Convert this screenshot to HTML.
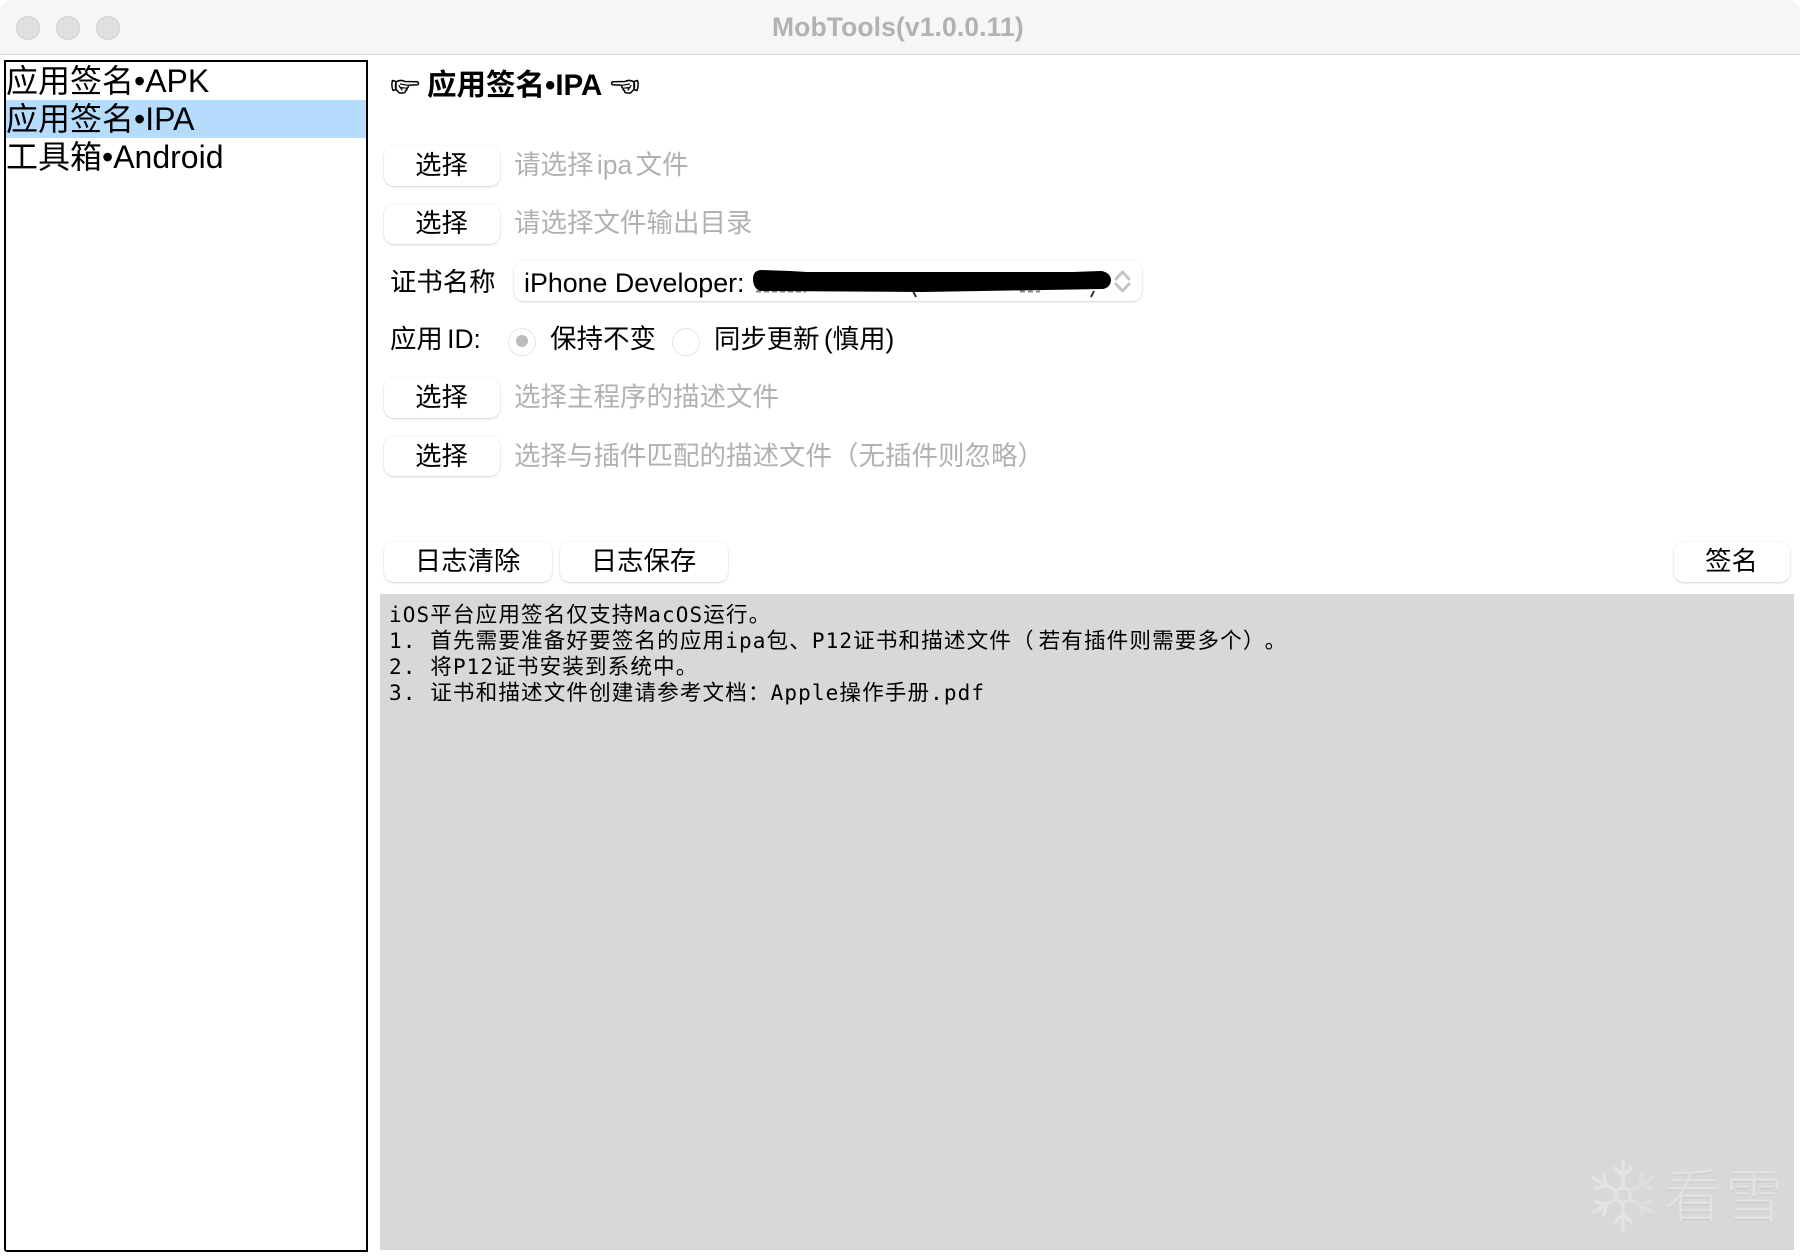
<!DOCTYPE html>
<html lang="zh"><head><meta charset="utf-8"><style>
html,body{margin:0;padding:0;width:1800px;height:1256px;overflow:hidden;background:#fff}
body{position:relative;font-family:"Liberation Sans","Noto Sans CJK SC",sans-serif;color:#000}
.a{position:absolute}
.t{position:absolute;white-space:nowrap;line-height:1}
.btn{position:absolute;height:40px;background:#fff;border-radius:10px;box-shadow:0 1px 2px rgba(0,0,0,.16),0 0 1px rgba(0,0,0,.1);text-align:center;font-size:26.4px;line-height:39px;text-indent:-1px}
.ph{color:#b1b1b1;font-size:26.5px}
.tl{position:absolute;top:16px;width:22px;height:22px;border-radius:50%;background:#e0e0e0;border:1px solid #cfcfcf}
.li{position:absolute;left:0;font-size:32px;line-height:38px;height:38px;white-space:nowrap;width:360px}
.rd{position:absolute;top:328px;width:26px;height:26px;border-radius:50%;background:#fff;border:1px solid #e6e6e6;box-shadow:0 1px 1px rgba(0,0,0,.04)}
.log{position:absolute;left:389px;white-space:pre;font-family:"DejaVu Sans Mono","Liberation Mono",monospace;font-size:21px;letter-spacing:1.1px;line-height:26px;height:26px;color:#000}
.log b{font-family:"Noto Sans CJK SC",sans-serif;font-weight:400;font-size:21.6px}
</style></head><body>
<div class="a" style="left:0;top:0;width:1800px;height:54px;background:#f6f6f6;border-bottom:1px solid #d2d2d2;border-radius:12px 12px 0 0"></div>
<div class="tl" style="left:16px"></div><div class="tl" style="left:56px"></div><div class="tl" style="left:96px"></div>
<div class="t" style="left:772px;top:14px;font-size:26.5px;font-weight:700;color:#b2b2b2;letter-spacing:.1px">MobTools(v1.0.0.11)</div>

<div class="a" style="left:4px;top:60px;width:360px;height:1188px;border:2px solid #000;background:#fff;border-bottom-left-radius:3px">
<div class="li" style="top:0">应用签名•APK</div>
<div class="li" style="top:38px;background:#b5dcfd">应用签名•IPA</div>
<div class="li" style="top:76px">工具箱•Android</div>
</div>

<svg class="a" style="left:391px;top:77px" width="29" height="17" viewBox="0 0 29 17" fill="#fff" stroke="#000" stroke-width="1.5" stroke-linejoin="round" stroke-linecap="round">
<path d="M1.5 3.5q-1.5 5 .5 10l3-1q-1-4 0-8z"/>
<path d="M5 5C8 3 11 3 14 4.500L26.500 4.800q2 1.500 0 3L17 8.200q1 2-1 3 .5 2-1.500 2.300 0 2.500-2.500 2.500H8.500L5 12.500z"/>
<path d="M9.500 7L16 8.200M9 10.500L15.500 11.200M8 8.500l3 4.500" fill="none" stroke-width="1.200"/>
</svg>
<div class="t" style="left:427px;top:71px;font-size:29.5px;font-weight:700">应用签名•IPA</div>
<svg class="a" style="left:610px;top:77px;transform:scaleX(-1)" width="29" height="17" viewBox="0 0 29 17" fill="#fff" stroke="#000" stroke-width="1.5" stroke-linejoin="round" stroke-linecap="round">
<path d="M1.500 3.500q-1.500 5 .5 10l3-1q-1-4 0-8z"/>
<path d="M5 5C8 3 11 3 14 4.500L26.500 4.800q2 1.500 0 3L17 8.200q1 2-1 3 .5 2-1.500 2.300 0 2.500-2.500 2.500H8.500L5 12.500z"/>
<path d="M9.500 7L16 8.200M9 10.500L15.500 11.200M8 8.500l3 4.500" fill="none" stroke-width="1.200"/>
</svg>

<div class="btn" style="left:384px;top:146px;width:116px">选择</div>
<div class="t ph" style="left:514px;top:152px;word-spacing:-4px">请选择 ipa 文件</div>
<div class="btn" style="left:384px;top:204px;width:116px">选择</div>
<div class="t ph" style="left:514px;top:210px">请选择文件输出目录</div>

<div class="t" style="left:390px;top:269px;font-size:26.4px;color:#000">证书名称</div>
<div class="a" style="left:514px;top:261px;width:628px;height:40px;background:#fff;border-radius:10px;box-shadow:0 1px 2px rgba(0,0,0,.16),0 0 1px rgba(0,0,0,.1)"></div>
<div class="t" style="left:524px;top:270px;font-size:26.8px;color:#000">iPhone Developer:</div>
<svg class="a" style="left:740px;top:250px" width="400" height="50" viewBox="0 0 400 50">
<path d="M173 41l3 6M351 47l3-6" stroke="#333" stroke-width="2" fill="none"/>
<path d="M16 41.500h50M280 41.500h20" stroke="#888" stroke-width="2" stroke-dasharray="5 3" fill="none"/>
<path d="M13 29C13 23 16 20 22 20L50 21 67 22 333 22 360 21C366 21 371 25 371 30 371 35 367 39 362 39L183 42 22 41C16 41 13 35 13 29z" fill="#000"/>
<path d="M376 29L382.500 22 389 29M376 34L382.500 41 389 34" stroke="#c4c4c4" stroke-width="3" fill="none" stroke-linecap="round" stroke-linejoin="round"/>
</svg>

<div class="t" style="left:390px;top:326px;font-size:26.4px;color:#000;word-spacing:-3px">应用 ID:</div>
<div class="rd" style="left:508px"></div><div class="a" style="left:516px;top:335px;width:12px;height:12px;border-radius:50%;background:#bdbdbd"></div>
<div class="t" style="left:550px;top:326px;font-size:26.5px;color:#000">保持不变</div>
<div class="rd" style="left:672px"></div>
<div class="t" style="left:714px;top:326px;font-size:26.4px;color:#000;word-spacing:-3px">同步更新 (慎用)</div>

<div class="btn" style="left:384px;top:378px;width:116px">选择</div>
<div class="t ph" style="left:514px;top:384px">选择主程序的描述文件</div>
<div class="btn" style="left:384px;top:436px;width:116px;line-height:40px">选择</div>
<div class="t ph" style="left:514px;top:443px">选择与插件匹配的描述文件（无插件则忽略）</div>

<div class="btn" style="left:384px;top:542px;width:168px">日志清除</div>
<div class="btn" style="left:560px;top:542px;width:168px">日志保存</div>
<div class="btn" style="left:1674px;top:542px;width:116px">签名</div>

<div class="a" style="left:380px;top:594px;width:1414px;height:655.500px;background:#d8d8d8"></div>
<div class="log" style="top:601px">iOS<b>平台应用签名仅支持</b>MacOS<b>运行。</b></div>
<div class="log" style="top:627px">1. <b>首先需要准备好要签名的应用</b>ipa<b>包、</b>P12<b>证书和描述文件<span style="letter-spacing:5px">（</span>若有插件则需要多个<span style="letter-spacing:11px">）</span>。</b></div>
<div class="log" style="top:653px">2. <b>将</b>P12<b>证书安装到系统中。</b></div>
<div class="log" style="top:679px">3. <b>证书和描述文件创建请参考文档：</b>Apple<b>操作手册</b>.pdf</div>

<svg class="a" style="left:1585px;top:1155px" width="76" height="80" viewBox="-38 -40 76 80" fill="none" stroke="#e3e3e3" stroke-width="3.500">
<polygon points="0,-8 7,-4 7,4 0,8 -7,4 -7,-4"/>
<path d="M0-8V-36M-9-28L0-19 9-28"/>
<path transform="rotate(60)" d="M0-8V-36M-9-28L0-19 9-28" stroke="#dedede"/>
<path transform="rotate(120)" d="M0-8V-36M-9-28L0-19 9-28" stroke="#dedede"/>
<path transform="rotate(180)" d="M0-8V-36M-9-28L0-19 9-28"/>
<path transform="rotate(240)" d="M0-8V-36M-9-28L0-19 9-28"/>
<path transform="rotate(300)" d="M0-8V-36M-9-28L0-19 9-28"/>
</svg>
<div class="t" style="left:1664px;top:1163px;font-size:58px;font-weight:300;color:#e2e2e2;font-family:'Noto Sans CJK SC',sans-serif;letter-spacing:3px;text-shadow:0 1px 1px rgba(0,0,0,.08)">看雪</div>
</body></html>
